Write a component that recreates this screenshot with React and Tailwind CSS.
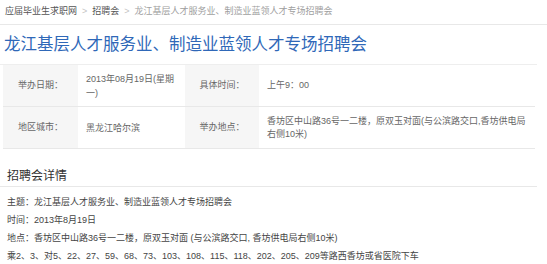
import React from "react";

const font = { fontFamily: '"Liberation Sans", "Noto Sans CJK SC", sans-serif' };

const rows = [
  {
    l1: "举办日期：",
    v1: "2013年08月19日(星期一)",
    l2: "具体时间：",
    v2: "上午9：00",
  },
  {
    l1: "地区城市：",
    v1: "黑龙江哈尔滨",
    l2: "举办地点：",
    v2: "香坊区中山路36号一二楼，原双玉对面(与公滨路交口,香坊供电局右侧10米)",
  },
];

const details = [
  "主题：龙江基层人才服务业、制造业蓝领人才专场招聘会",
  "时间：2013年8月19日",
  "地点：香坊区中山路36号一二楼，原双玉对面 (与公滨路交口, 香坊供电局右侧10米)",
  "乘2、3、对5、22、27、59、68、73、103、108、115、118、202、205、209等路西香坊或省医院下车",
];

export default function App() {
  return (
    <div className="w-[547px] h-[264px] overflow-hidden bg-white" style={font}>
      {/* breadcrumb */}
      <div className="h-[25px] border-b border-[#e8e8e8] flex items-center pl-[5px] text-[9px] text-[#555] gap-[5px]">
        <span>应届毕业生求职网</span>
        <span className="text-[#c4c4c4]">&gt;</span>
        <span>招聘会</span>
        <span className="text-[#c4c4c4]">&gt;</span>
        <span className="text-[#a0a0a0]">龙江基层人才服务业、制造业蓝领人才专场招聘会</span>
      </div>

      {/* title */}
      <div className="w-[537px] h-[40px] border-b border-[#eeeeee] flex items-center pl-[4px]">
        <h1 className="text-[16.5px] text-[#2f68b8] leading-none">
          龙江基层人才服务业、制造业蓝领人才专场招聘会
        </h1>
      </div>

      {/* info table */}
      <div className="ml-[3px] w-[532px] text-[9px] text-[#666]">
        {rows.map((r, i) => (
          <div key={i} className="flex h-[42px] border-b border-[#e8e8e8]">
            <div className="w-[75px] bg-[#f6f6f6] flex items-center justify-center">{r.l1}</div>
            <div className="w-[107px] pl-[8px] pr-[10px] flex items-center leading-[14px]">{r.v1}</div>
            <div className="w-[74px] bg-[#f6f6f6] flex items-center justify-center">{r.l2}</div>
            <div className="flex-1 pl-[8px] pr-[6px] flex items-center leading-[13px]">{r.v2}</div>
          </div>
        ))}
      </div>

      {/* details */}
      <div className="mt-[16px] w-[537px] h-[22px] border-b border-[#e8e8e8] pl-[7px] flex items-center text-[12px] text-[#333]">
        招聘会详情
      </div>
      <div className="pt-[6px] pl-[7px] text-[9px] leading-[18px] text-[#444]">
        {details.map((d, i) => (
          <div key={i} className="whitespace-nowrap">{d}</div>
        ))}
      </div>
    </div>
  );
}
